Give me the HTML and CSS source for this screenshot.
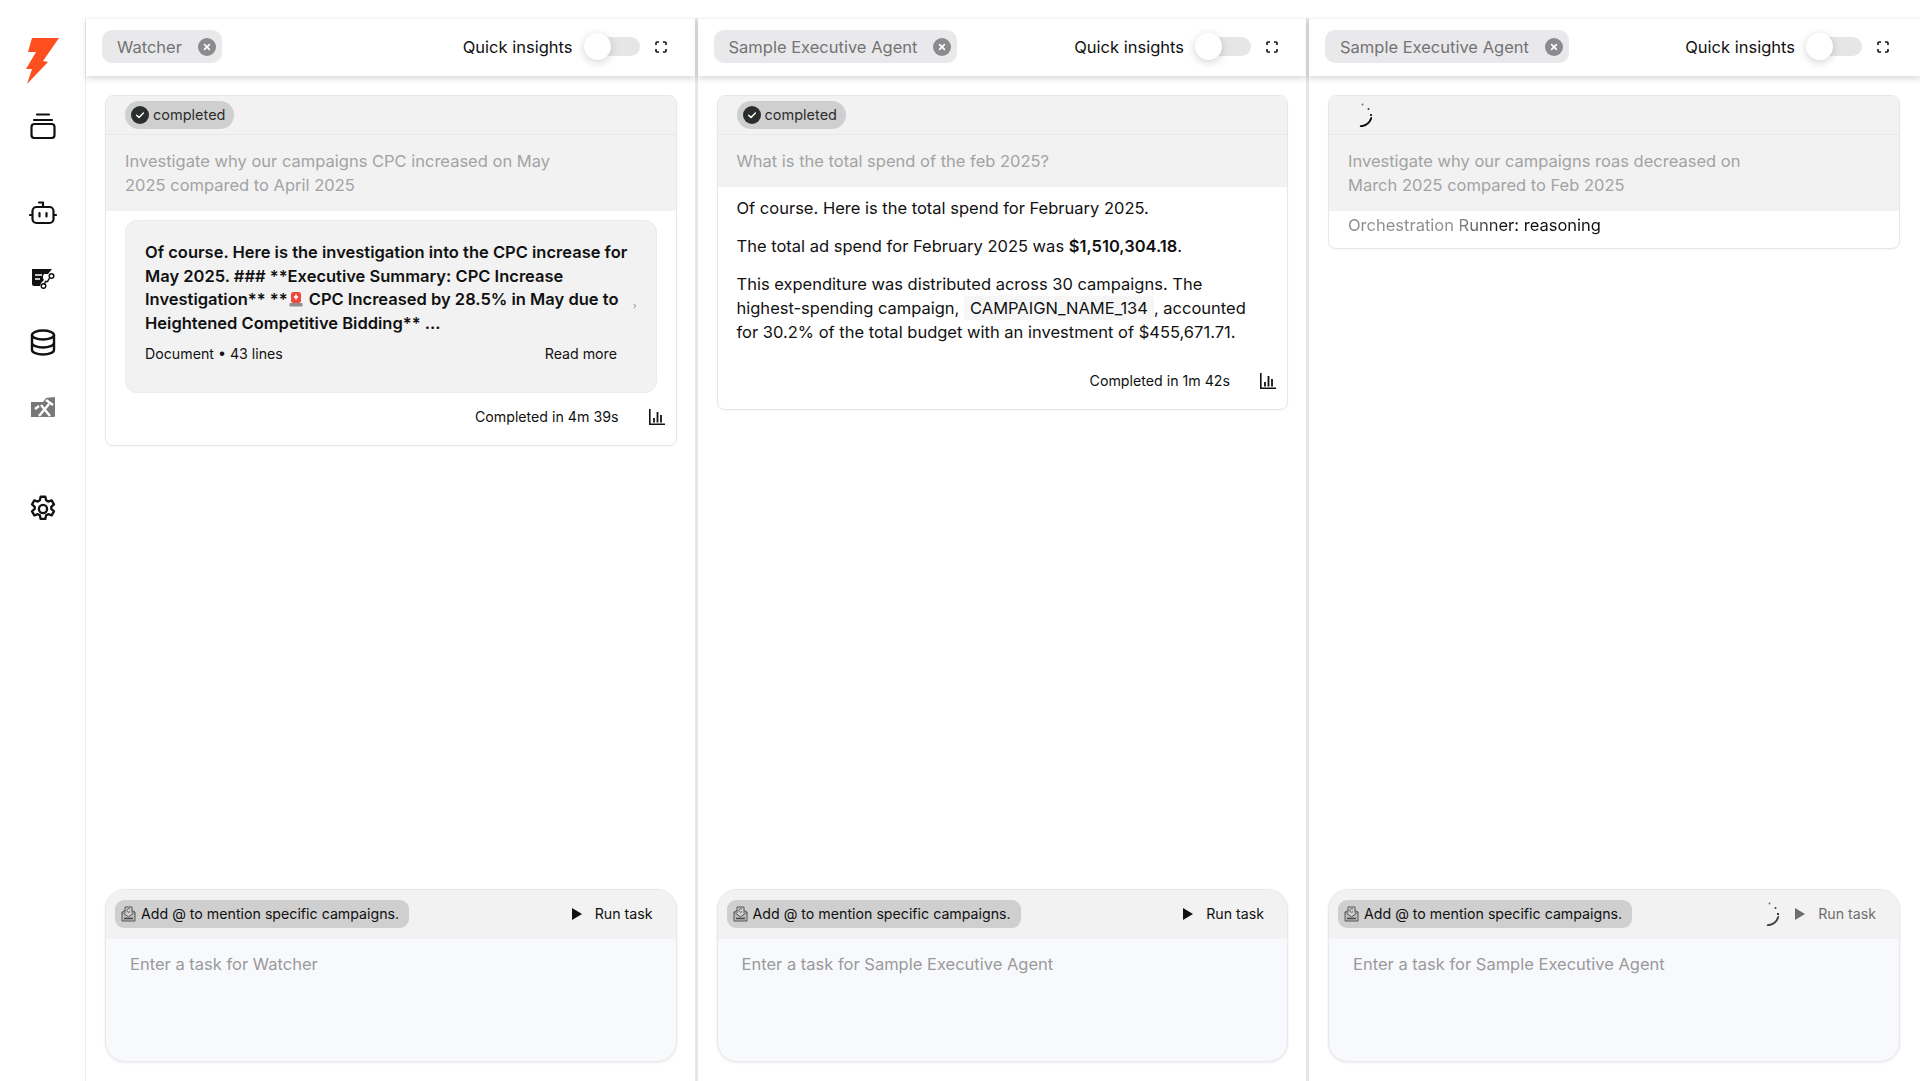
FILE: index.html
```html
<!DOCTYPE html>
<html lang="en">

<head>
    <meta charset="UTF-8">
    <meta name="viewport" content="width=device-width, initial-scale=1.0">
    <title>Agents</title>
    <link rel="stylesheet" href="styles.css">
</head>

<body>
    <svg class="defs" width="0" height="0" aria-hidden="true">
        <symbol id="i-close" viewBox="0 0 18 18">
            <circle cx="9" cy="9" r="9" fill="#8b8b8d" />
            <path d="M6.6 6.6l4.8 4.8M11.4 6.6l-4.8 4.8" stroke="#fff" stroke-width="1.6" stroke-linecap="round" />
        </symbol>
        <symbol id="i-expand" viewBox="0 0 12 12">
            <path d="M1 4V2a1 1 0 0 1 1-1h2M8 1h2a1 1 0 0 1 1 1v2M11 8v2a1 1 0 0 1-1 1H8M4 11H2a1 1 0 0 1-1-1V8" fill="none" stroke="#111" stroke-width="1.6" />
        </symbol>
        <symbol id="i-check" viewBox="0 0 18 18">
            <circle cx="9" cy="9" r="9" fill="#2a2e2d" />
            <path d="M5.6 9.2l2.4 2.4 4.4-4.6" fill="none" stroke="#fff" stroke-width="1.4" stroke-linecap="round" stroke-linejoin="round" />
        </symbol>
        <symbol id="i-chart" viewBox="0 0 16 16">
            <path d="M.8 0v15.200h15.200" fill="none" stroke="#111" stroke-width="1.600" />
            <path d="M5 9v4.500M8.500 3v10.500M12 6v7.500" fill="none" stroke="#111" stroke-width="1.800" />
        </symbol>
        <symbol id="i-mention" viewBox="0 0 15 16">
            <path d="M4 7V1h7v6" fill="none" stroke="#555" stroke-width="1" />
            <path d="M1 6l3-1.500M14 6l-3-1.500M1 6v9h13V6L7.500 11z" fill="#bbb" stroke="#555" stroke-width="1" />
            <path d="M9 3.200a1.800 1.800 0 1 0 0 2.400" fill="none" stroke="#555" stroke-width="0.900" />
            <path d="M3 12.500h9" stroke="#444" stroke-width="1.600" />
        </symbol>
        <symbol id="i-spin" viewBox="0 0 24 24">
            <circle cx="14.500" cy="1.500" r="0.900" fill="#111" opacity=".6" />
            <circle cx="20.500" cy="6" r="1" fill="#111" opacity=".8" />
            <circle cx="23" cy="12" r="1.100" fill="#111" />
            <path d="M23.300 15a12 12 0 0 1-10.500 8.200" fill="none" stroke="currentColor" stroke-width="2" stroke-linecap="round" />
        </symbol>
    </svg>

    <div class="app">
        <nav class="sidebar">
            <svg class="logo" viewBox="0 0 33 46">
                <polygon fill="#ff4f1f" points="6,0 33,0 17,23 22,24 1,46 6,31 0,31 10,14 2,14" />
            </svg>

            <svg class="nav-icon nav-stack" viewBox="0 0 26 26" fill="none" stroke="#111" stroke-width="2.200">
                <path d="M7 1.500h12M4 7h18" stroke-linecap="round" />
                <rect x="1.500" y="11" width="23" height="14" rx="3" />
            </svg>

            <svg class="nav-icon nav-bot" viewBox="0 0 28 24" fill="none" stroke="#111" stroke-width="2.200">
                <path d="M10 1.500h4v4" stroke-linecap="round" stroke-linejoin="round" />
                <rect x="3.500" y="6" width="21" height="16" rx="4" />
                <path d="M1 14h2M25 14h2" stroke-linecap="round" />
                <path d="M10.500 12v3.500M17.500 12v3.500" stroke-linecap="round" />
            </svg>

            <svg class="nav-icon nav-flow" viewBox="0 0 24 20">
                <path fill="#111" d="M1 0h20l-4 5H13a5 5 0 0 0 0 6 l-3 3-1 3H3a2 2 0 0 1-2-2z" />
                <path d="M4 6h7M4 10h5" stroke="#fff" stroke-width="1.600" />
                <circle cx="20.500" cy="7" r="2.300" fill="none" stroke="#111" stroke-width="1.500" />
                <circle cx="12.500" cy="17" r="2.300" fill="none" stroke="#111" stroke-width="1.500" />
                <path d="M18.800 8.500l-2.300 4h-2l-1 2.200" fill="none" stroke="#111" stroke-width="1.500" />
            </svg>

            <svg class="nav-icon nav-db" viewBox="0 0 26 27" fill="none" stroke="#111" stroke-width="2.400">
                <ellipse cx="13" cy="6" rx="11" ry="4.500" />
                <path d="M2 6v15c0 2.500 5 4.500 11 4.500s11-2 11-4.500V6" />
                <path d="M2 14c0 2.500 5 4.500 11 4.500s11-2 11-4.500" />
            </svg>

            <svg class="nav-icon nav-tools" viewBox="0 0 24 20">
                <path fill="#77787a" d="M0 5h12l3-4 8-1a1 1 0 0 1 1 1v18a1 1 0 0 1-1 1H0z" />
                <path d="M8 19l10-12M10 8l9 11M15 3l7 5M4 12l4-3" stroke="#fff" stroke-width="2.400" fill="none" />
            </svg>

            <svg class="nav-icon nav-gear" viewBox="0 0 24 24" fill="none" stroke="#111" stroke-width="2" stroke-linejoin="round">
                <path d="M10 1.500h4l.7 3.100 1.700 1 3-1 2 3.400-2.300 2.100v1.800l2.300 2.100-2 3.400-3-1-1.700 1-.7 3.100h-4l-.7-3.100-1.700-1-3 1-2-3.400 2.300-2.100v-1.800L2.600 8l2-3.400 3 1 1.700-1z" />
                <circle cx="12" cy="12" r="3.500" />
            </svg>
        </nav>

        <main class="columns">
            <section class="column">
                <header class="column-head">
                    <div class="agent-chip">Watcher <svg class="chip-close"><use href="#i-close" /></svg></div>
                    <div class="head-tools">
                        <span>Quick insights</span>
                        <span class="toggle"><span class="knob"></span></span>
                        <svg class="expand"><use href="#i-expand" /></svg>
                    </div>
                </header>
                <div class="column-body">
                    <article class="card">
                        <div class="card-status">
                            <span class="badge"><svg class="badge-check"><use href="#i-check" /></svg>completed</span>
                        </div>
                        <p class="prompt">Investigate why our campaigns CPC increased on May<br>2025 compared to April 2025</p>
                        <div class="card-main">
                            <div class="doc-box">
                                <p class="doc-text">Of course. Here is the investigation into the CPC increase for May 2025. ### **Executive Summary: CPC Increase Investigation** **<svg class="siren" viewBox="0 0 14 16"><rect x="2" y="1" width="10" height="11" rx="2.500" fill="#f0483e" /><path d="M7 3.500v5M4.800 6h4.400" stroke="#fff" stroke-width="1.500" /><rect x="0.500" y="12" width="13" height="3.500" rx="1" fill="#8f8f8f" /></svg> CPC Increased by 28.5% in May due to Heightened Competitive Bidding** ...</p>
                                <div class="doc-meta">
                                    <span>Document &bull; 43 lines</span>
                                    <span>Read more</span>
                                </div>
                                <span class="doc-chevron">&rsaquo;</span>
                            </div>
                        </div>
                        <footer class="card-foot">
                            <span>Completed in 4m 39s</span>
                            <svg class="chart"><use href="#i-chart" /></svg>
                        </footer>
                    </article>
                </div>
                <div class="composer">
                    <div class="composer-head">
                        <span class="mention"><svg class="mention-icon"><use href="#i-mention" /></svg>Add @ to mention specific campaigns.</span>
                        <span class="run"><span class="play"></span>Run task</span>
                    </div>
                    <div class="composer-input">Enter a task for Watcher</div>
                </div>
            </section>

            <section class="column">
                <header class="column-head">
                    <div class="agent-chip">Sample Executive Agent <svg class="chip-close"><use href="#i-close" /></svg></div>
                    <div class="head-tools">
                        <span>Quick insights</span>
                        <span class="toggle"><span class="knob"></span></span>
                        <svg class="expand"><use href="#i-expand" /></svg>
                    </div>
                </header>
                <div class="column-body">
                    <article class="card">
                        <div class="card-status">
                            <span class="badge"><svg class="badge-check"><use href="#i-check" /></svg>completed</span>
                        </div>
                        <p class="prompt">What is the total spend of the feb 2025?</p>
                        <div class="card-main answer">
                            <p>Of course. Here is the total spend for February 2025.</p>
                            <p>The total ad spend for February 2025 was <strong>$1,510,304.18</strong>.</p>
                            <p>This expenditure was distributed across 30 campaigns. The<br>highest-spending campaign, <code>CAMPAIGN_NAME_134</code>, accounted<br>for 30.2% of the total budget with an investment of $455,671.71.</p>
                        </div>
                        <footer class="card-foot">
                            <span>Completed in 1m 42s</span>
                            <svg class="chart"><use href="#i-chart" /></svg>
                        </footer>
                    </article>
                </div>
                <div class="composer">
                    <div class="composer-head">
                        <span class="mention"><svg class="mention-icon"><use href="#i-mention" /></svg>Add @ to mention specific campaigns.</span>
                        <span class="run"><span class="play"></span>Run task</span>
                    </div>
                    <div class="composer-input">Enter a task for Sample Executive Agent</div>
                </div>
            </section>

            <section class="column">
                <header class="column-head">
                    <div class="agent-chip">Sample Executive Agent <svg class="chip-close"><use href="#i-close" /></svg></div>
                    <div class="head-tools">
                        <span>Quick insights</span>
                        <span class="toggle"><span class="knob"></span></span>
                        <svg class="expand"><use href="#i-expand" /></svg>
                    </div>
                </header>
                <div class="column-body">
                    <article class="card">
                        <div class="card-status">
                            <svg class="spinner"><use href="#i-spin" /></svg>
                        </div>
                        <p class="prompt">Investigate why our campaigns roas decreased on<br>March 2025 compared to Feb 2025</p>
                        <p class="runner">Orchestration Runner: reasoning</p>
                    </article>
                </div>
                <div class="composer">
                    <div class="composer-head">
                        <span class="mention"><svg class="mention-icon"><use href="#i-mention" /></svg>Add @ to mention specific campaigns.</span>
                        <span class="run busy"><svg class="spinner"><use href="#i-spin" /></svg><span class="play"></span>Run task</span>
                    </div>
                    <div class="composer-input">Enter a task for Sample Executive Agent</div>
                </div>
            </section>
        </main>
    </div>
</body>

</html>
```

FILE: styles.css
```css
* {
    box-sizing: border-box;
}

body {
    font-family: Inter, "Noto Sans", sans-serif;
    font-size: 16.5px;
    line-height: 24px;
    color: #111;
    background: #fff;
    margin: 0;
    height: 1081px;
    overflow: hidden;
}

p {
    margin: 0;
}

svg {
    display: block;
    flex-shrink: 0;
}

.defs {
    position: absolute;
}

.app {
    display: flex;
    height: 100%;
}

.sidebar {
    display: flex;
    flex-direction: column;
    align-items: center;
    width: 85px;
    padding-top: 38px;
}

.logo {
    width: 33px;
    height: 46px;
    margin-bottom: 29px;
}

.nav-icon {
    width: 26px;
}

.nav-stack {
    height: 26px;
    margin-bottom: 62px;
}

.nav-bot {
    width: 28px;
    height: 24px;
    margin-bottom: 44px;
}

.nav-flow {
    width: 24px;
    height: 20px;
    margin-bottom: 40px;
}

.nav-db {
    height: 27px;
    margin-bottom: 41px;
}

.nav-tools {
    width: 24px;
    height: 20px;
    margin-bottom: 78px;
}

.nav-gear {
    width: 28px;
    height: 28px;
}

.columns {
    display: flex;
    flex: 1;
    margin-top: 18px;
    min-width: 0;
    border-left: 1px solid #ececec;
}

.column {
    display: flex;
    flex-direction: column;
    flex: 1;
    min-width: 0;
    border-right: 3px solid #e6e6e6;

    &:last-child {
        border-right: 0;
        flex: 0 0 611px;

        .column-head {
            padding-right: 31px;
        }

        .column-body {
            padding-right: 20px;
        }

        .composer {
            margin-right: 20px;
        }
    }
}

.column-head {
    display: flex;
    justify-content: space-between;
    align-items: center;
    height: 58px;
    padding: 0 28px 2px 16px;
    border-top: 1px solid #f4f4f4;
    box-shadow: 0 3px 6px rgba(0, 0, 0, 0.14);
}

.agent-chip {
    display: flex;
    align-items: center;
    gap: 16px;
    height: 33px;
    padding: 0 6px 0 15px;
    background: #e9e9eb;
    border-radius: 10px;
    color: #737373;
}

.chip-close {
    width: 18px;
    height: 18px;
}

.head-tools {
    display: flex;
    align-items: center;
}

.toggle {
    position: relative;
    width: 54px;
    height: 19px;
    margin: 0 15px 0 13px;
    background: #e6e6e6;
    border-radius: 10px;
}

.knob {
    position: absolute;
    left: -2px;
    top: -4px;
    width: 27px;
    height: 27px;
    background: #fff;
    border-radius: 50%;
    box-shadow: 0 2px 8px rgba(0, 0, 0, 0.18);
}

.expand {
    width: 12px;
    height: 12px;
}

.column-body {
    flex: 1;
    padding: 19px 18px 0 19px;
}

.card {
    border: 1px solid #e7e7e7;
    border-radius: 8px;
    overflow: hidden;
    box-shadow: 0 1px 2px rgba(0, 0, 0, 0.04);
}

.card-status {
    display: flex;
    align-items: center;
    height: 39px;
    padding: 0 19px;
    background: #f2f2f2;
    border-bottom: 1px solid #e8e8e8;
}

.badge {
    display: flex;
    align-items: center;
    gap: 4px;
    height: 28px;
    padding: 0 9px 0 6px;
    background: #cfcfcf;
    border-radius: 14px;
    font-size: 14.5px;
    color: #2c2c2c;
}

.badge-check {
    width: 18px;
    height: 18px;
}

.spinner {
    width: 24px;
    height: 24px;
    color: #111;
}

.prompt {
    padding: 14px 19px 14px;
    background: #f2f2f2;
    color: #a3a3a3;
}

.card-main {
    padding: 9px 19px 0;
}

.doc-box {
    position: relative;
    height: 173px;
    padding: 20px 0 0 19px;
    background: #f2f2f2;
    border: 1px solid #ebebeb;
    border-radius: 12px;
}

.doc-text {
    width: 497px;
    font-weight: 600;
    line-height: 23.7px;
}

.siren {
    display: inline-block;
    width: 14px;
    height: 16px;
    margin: 0 2px 0 1px;
    vertical-align: -2px;
}

.doc-meta {
    display: flex;
    justify-content: space-between;
    width: 472px;
    margin-top: 8px;
    font-size: 14.2px;
    line-height: 20px;
}

.doc-chevron {
    position: absolute;
    left: 507px;
    top: 73px;
    font-size: 9px;
    color: #888;
}

.answer {
    padding-bottom: 13px;

    p {
        margin-bottom: 14px;
    }

    strong {
        font-weight: 600;
    }

    code {
        font-family: inherit;
        background: #f6f6f6;
        padding: 2px 6px;
        border-radius: 4px;
    }
}

.card-foot {
    display: flex;
    justify-content: flex-end;
    align-items: center;
    gap: 30px;
    height: 20px;
    margin: 14px 11px 18px 0;
    font-size: 14.2px;
}

.answer + .card-foot {
    margin-top: 0;
}

.chart {
    width: 16px;
    height: 16px;
}

.runner {
    padding: 2px 19px 11px;
    background: linear-gradient(90deg, #8c8c8c 0, #8c8c8c 130px, #111 175px);
    background-clip: text;
    -webkit-background-clip: text;
    color: transparent;
}

.composer {
    margin: 0 18px 19px 19px;
    height: 173px;
    border: 1px solid #e8e8e8;
    border-radius: 20px;
    overflow: hidden;
    box-shadow: 0 1px 3px rgba(0, 0, 0, 0.08);
    background: #f8f9fc;
}

.composer-head {
    display: flex;
    justify-content: space-between;
    align-items: center;
    height: 49px;
    padding: 0 23px 2px 9px;
    background: #f2f2f2;
}

.mention {
    display: flex;
    align-items: center;
    gap: 5px;
    height: 28px;
    padding: 0 10px 0 6px;
    background: #cfcfcf;
    border-radius: 9px;
    font-size: 14.2px;
}

.mention-icon {
    width: 15px;
    height: 16px;
}

.run {
    display: flex;
    align-items: center;
    font-size: 14.2px;

    &.busy {
        color: #6e6e6e;

        .play {
            border-left-color: #6e6e6e;
        }

        .spinner {
            color: #444;
            margin-right: 16px;
        }
    }
}

.play {
    width: 0;
    height: 0;
    margin-right: 13px;
    border-left: 10px solid #111;
    border-top: 6px solid transparent;
    border-bottom: 6px solid transparent;
}

.composer-input {
    padding: 13px 24px;
    color: #9a9a9a;
}
```
